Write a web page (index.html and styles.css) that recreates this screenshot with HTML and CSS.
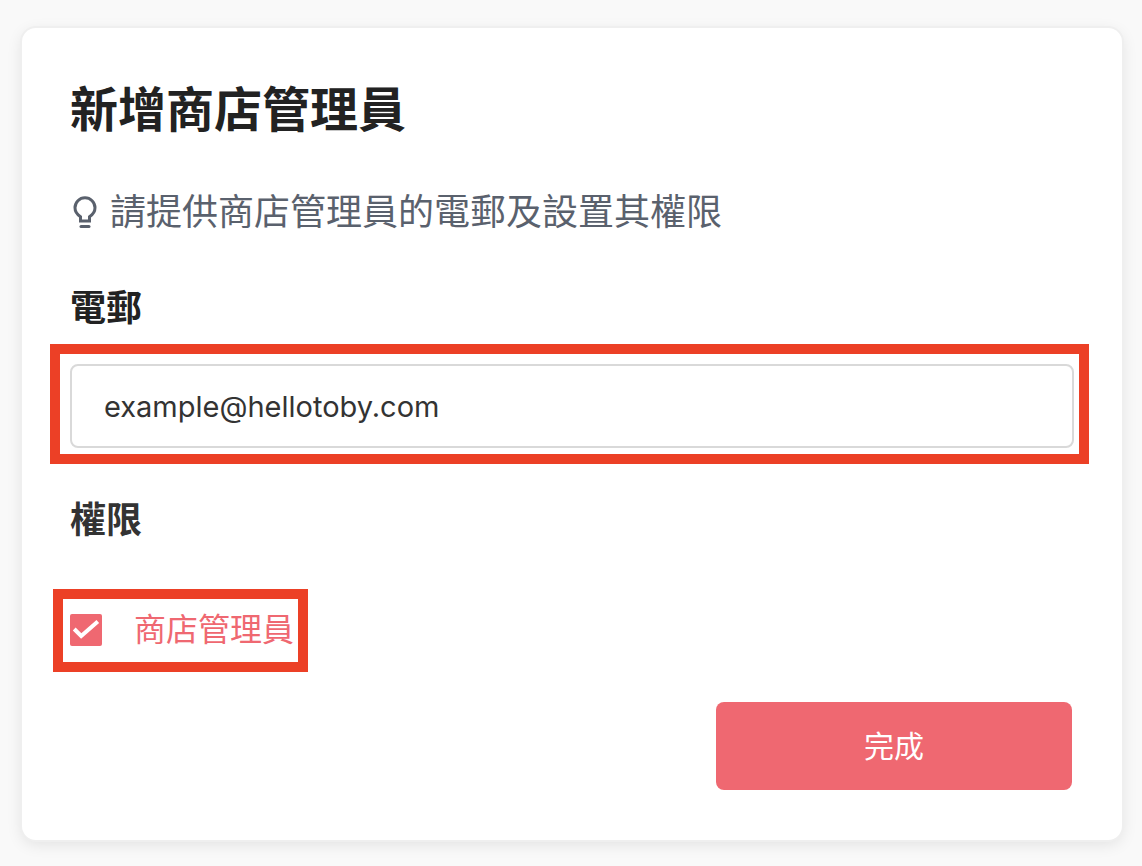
FILE: index.html
```html
<!DOCTYPE html>
<html lang="zh-Hant">
<head>
	<meta charset="UTF-8">
	<meta name="viewport" content="width=device-width, initial-scale=1.0">
	<title>新增商店管理員</title>
	<link rel="stylesheet" href="styles.css">
</head>
<body>
	<form class="card">
		<h1 class="title">新增商店管理員</h1>

		<p class="hint">
			<svg class="bulb" viewBox="0 0 24 32" fill="none" stroke="currentColor" stroke-width="3" aria-hidden="true">
				<path d="M7.500 25v-4.200C4 18.500 2 15.500 2 11.800a10 10 0 0 1 20 0c0 3.700-2 6.700-5.500 9v4.200z"/>
				<path d="M8 30.500h8" stroke-linecap="round"/>
			</svg>
			<span>請提供商店管理員的電郵及設置其權限</span>
		</p>

		<label class="label" for="email">電郵</label>
		<div class="highlight highlight-email">
			<input class="email" type="email" id="email" value="example@hellotoby.com">
		</div>

		<h2 class="label label-role">權限</h2>
		<div class="highlight highlight-role">
			<input class="check" type="checkbox" id="manager" checked>
			<svg class="tick" viewBox="0 0 32 32" fill="none" stroke="currentColor" stroke-width="4" aria-hidden="true">
				<path d="M4.200 15L11.200 22L27.800 7.500"/>
			</svg>
			<label for="manager">商店管理員</label>
		</div>

		<button class="submit" type="submit">完成</button>
	</form>
</body>
</html>
```

FILE: styles.css
```css
* {
	box-sizing: border-box;
}

body {
	margin: 0;
	padding: 28px 20px 26px 22px;
	background-color: #f9f9f9;
	color: #222;
	font-family: Inter, "Noto Sans CJK TC", sans-serif;
}

.card {
	display: flex;
	flex-direction: column;
	padding: 50px 48px;
	border-radius: 14px;
	background-color: #fff;
	box-shadow: 0 0 0 2px #efefef, 0 4px 16px rgba(0, 0, 0, 0.1);
}

.title {
	margin: 0 0 46px;
	font-size: 48px;
	line-height: 64px;
	font-weight: 700;
}

.hint {
	display: flex;
	align-items: center;
	gap: 13px;
	margin: 0 0 48px;
	padding-left: 3px;
	color: #5a616d;
	font-size: 36px;
	line-height: 48px;
}

.bulb {
	flex: none;
	width: 24px;
	height: 32px;
}

.label {
	margin: 0 0 12px;
	font-size: 36px;
	line-height: 48px;
	font-weight: 700;
}

.label-role {
	margin-bottom: 45px;
	color: #333;
}

.highlight {
	border: 10px solid #ec4026;
}

/* the frame sits wider than the field, the field keeps the card's margins */
.highlight-email {
	margin: 0 -15px 32px -20px;
	padding: 10px 5px 6px 10px;
}

.email {
	display: block;
	width: 100%;
	height: 84px;
	padding: 0 32px;
	border: 2px solid #d9d9d9;
	border-radius: 8px;
	background-color: #fff;
	color: #333;
	font-family: inherit;
	font-size: 29px;
	outline: none;
}

.highlight-role {
	position: relative;
	display: flex;
	align-items: center;
	align-self: flex-start;
	gap: 32px;
	height: 83px;
	margin: 0 0 30px -17px;
	padding: 0 4px 1px 7px;
	color: #ef6871;
	font-size: 32px;
	line-height: 48px;
}

.check {
	appearance: none;
	width: 32px;
	height: 32px;
	margin: 0;
	border-radius: 2px;
	background-color: #ef6871;
}

.tick {
	position: absolute;
	left: 7px;
	width: 32px;
	height: 32px;
	color: #fff;
	pointer-events: none;
	visibility: hidden;
}

.check:checked + .tick {
	visibility: visible;
}

.submit {
	align-self: flex-end;
	width: 356px;
	max-width: 100%;
	height: 88px;
	margin-right: 2px;
	padding: 0 0 4px;
	border: 0;
	border-radius: 8px;
	background-color: #ef6871;
	color: #fff;
	font-family: inherit;
	font-size: 30px;
	cursor: pointer;
}
```
